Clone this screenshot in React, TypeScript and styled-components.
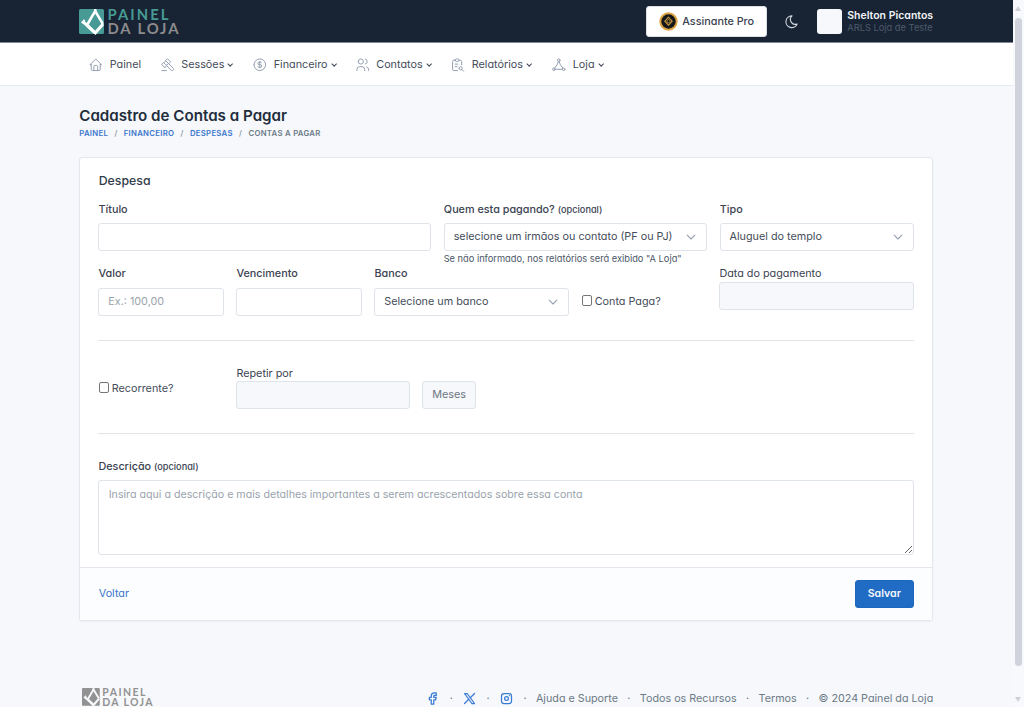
import React from "react";
import styled, { createGlobalStyle, css } from "styled-components";
import {
  TbHome,
  TbGavel,
  TbCoin,
  TbUsers,
  TbReportSearch,
  TbMoon,
  TbBrandFacebook,
  TbBrandX,
  TbBrandInstagram,
} from "react-icons/tb";

const Global = createGlobalStyle`
  *, *::before, *::after { box-sizing: border-box; }
  html, body { margin: 0; height: 100%; overflow: hidden; }
  body {
    background: #f6f8fb;
    color: #454c5a;
    font-family: Inter, "Liberation Sans", sans-serif;
    font-feature-settings: "cv03", "cv04", "cv11";
    font-size: 10.8px;
    line-height: 15.5px;
  }
  a { color: inherit; text-decoration: none; }
  input, select, textarea, button { font: inherit; font-feature-settings: inherit; }
`;

const Window = styled.div`
  display: grid;
  grid-template-columns: 1012.5px 1fr;
  height: 707px;
  overflow: hidden;
`;
const Page = styled.div`
  height: 707px;
  overflow: hidden;
`;
const Container = styled.div`
  width: 854px;
  margin: 0 auto;
  padding-top: 2px;
  display: flex;
  align-items: center;
`;

/* scroll bar */
const Rail = styled.div`
  display: flex;
  flex-direction: column;
  align-items: center;
  padding: 6px 0 5px;
  background: #f8f9fc;
`;
const Arrow = styled.div<{ $down?: boolean }>`
  width: 0;
  height: 0;
  border-left: 3.5px solid transparent;
  border-right: 3.5px solid transparent;
  ${(p) => (p.$down ? css`border-top: 5px solid #cfd1d8; margin-top: auto;` : css`border-bottom: 5px solid #cfd1d8;`)}
`;
const Thumb = styled.div`
  width: 7px;
  height: 648px;
  margin-top: 7px;
  border-radius: 4px;
  background: #d0d3db;
`;

/* top bar */
const TopBar = styled.header`
  background: #182433;
  height: 42.5px;
  border-bottom: 1px solid #7d8795;
  display: flex;
`;
const ProButton = styled.button`
  margin-left: auto;
  width: 121px;
  height: 31px;
  display: flex;
  align-items: center;
  gap: 4px;
  padding: 0 0 0 12px;
  border: 1px solid #dce1e7;
  border-radius: 3px;
  background: #fff;
  color: #3a4251;
  font-weight: 480;
  white-space: nowrap;
`;
const Moon = styled.span`
  display: flex;
  margin: 0 17px;
  color: #d5dae1;
  font-size: 15.5px;
`;
const Avatar = styled.span`
  width: 25px;
  height: 25px;
  border-radius: 3px;
  background: #f6f8fb;
  margin-right: 5.5px;
`;
const User = styled.div`
  width: 86px;
  white-space: nowrap;
`;
const UserName = styled.div`
  color: #f0f3f7;
  font-weight: 580;
  font-size: 10.5px;
  line-height: 13px;
`;
const UserLodge = styled.div`
  color: #4d5a6c;
  font-size: 9.3px;
  line-height: 12px;
`;

/* navigation */
const NavBar = styled.nav`
  height: 43.5px;
  background: #fff;
  border-bottom: 1px solid #e6eaf0;
  display: flex;
`;
const NavItem = styled.a<{ $w: number }>`
  width: ${(p) => p.$w}px;
  display: flex;
  align-items: center;
  white-space: nowrap;
  svg:first-child { font-size: 15.5px; color: #929dae; margin-right: 6px; stroke-width: 1.5; }
`;
const NavList = styled.div`
  display: flex;
  padding-left: 9px;
`;
const Caret = styled.i`
  width: 4.4px;
  height: 4.4px;
  border: solid #3f4654;
  border-width: 0 1.1px 1.1px 0;
  transform: rotate(45deg);
  margin: -2px 0 0 4px;
`;

/* page heading */
const Heading = styled.div`
  width: 854px;
  margin: 0 auto;
  padding-top: 20px;
  height: 71px;
`;
const Title = styled.h1`
  margin: 0;
  font-size: 15.15px;
  line-height: 20.5px;
  font-weight: 580;
  color: #222d3c;
`;
const Crumbs = styled.div`
  display: flex;
  font-size: 7.75px;
  line-height: 13.5px;
  font-weight: 580;
  letter-spacing: 0.29px;
  color: #6c7a86;
  a { color: #3a76cc; }
  span { width: 15.6px; text-align: center; font-weight: 400; }
`;

/* card */
const Card = styled.main`
  width: 854px;
  height: 464px;
  margin: 0 auto;
  background: #fff;
  border: 1px solid #e3e7ed;
  border-radius: 3px;
  box-shadow: 0 1px 2px rgba(24, 36, 51, 0.04);
  display: flex;
  flex-direction: column;
`;
const CardBody = styled.div`
  padding: 13.5px 18px 0;
  flex: 1;
`;
const SectionTitle = styled.h3`
  margin: 0 0 12px;
  padding-left: 0.5px;
  font-size: 12.3px;
  line-height: 18px;
  font-weight: 480;
  color: #333c4b;
`;
const Row = styled.div<{ $h: number }>`
  display: flex;
  gap: 12.4px;
  height: ${(p) => p.$h}px;
`;
const Field = styled.div<{ $w: number; $gap?: number }>`
  width: ${(p) => p.$w}px;
  display: flex;
  flex-direction: column;
  gap: ${(p) => p.$gap ?? 6}px;
`;
const Label = styled.label<{ $plain?: boolean }>`
  font-weight: ${(p) => (p.$plain ? 400 : 480)};
  line-height: 15.5px;
  padding-left: 0.2px;
  white-space: nowrap;
  color: #3b4352;
  small { font-size: 9.2px; }
`;
const control = css`
  width: 100%;
  height: 28px;
  border: 1px solid #dfe3ea;
  border-radius: 3px;
  background: #fff;
  color: #454c5a;
  padding: 0 9px;
  outline: none;
`;
const Input = styled.input`
  ${control}
  display: block;
  &::placeholder { color: #99a3ad; opacity: 1; }
  &:disabled { background: #f6f8fb; }
`;
const SelectBox = styled.div`
  ${control}
  display: flex;
  align-items: center;
  justify-content: space-between;
  white-space: nowrap;
  padding-right: 10px;
`;
const TextArea = styled.textarea`
  ${control}
  display: block;
  height: 75px;
  padding: 6px 9.5px;
  font-size: 10.66px;
  resize: vertical;
  &::placeholder { color: #99a3ad; opacity: 1; }
`;
const Hint = styled.small`
  font-size: 9.27px;
  line-height: 12px;
  margin-top: -4px;
  color: #4c5767;
  white-space: nowrap;
`;
const Check = styled.label<{ $w: number; $top: number }>`
  width: ${(p) => p.$w}px;
  padding-top: ${(p) => p.$top}px;
  display: flex;
  align-items: flex-start;
  gap: 2.5px;
  white-space: nowrap;
  input { width: 10.5px; height: 10.5px; margin: 1px 0 0 0.5px; appearance: none; border: 1px solid #767676; border-radius: 2px; background: #fff; }
`;
const Rule = styled.hr`
  margin: 0;
  height: 1px;
  border: 0;
  background: #e1e4e9;
`;
const RepeatField = styled.div`
  width: 173.5px;
  padding-top: 24.5px;
`;
const UnitSlot = styled.div`
  padding-top: 24.5px;
`;
const Unit = styled.div`
  margin-top: 15.5px;
  width: 54px;
  height: 28px;
  border: 1px solid #dfe3ea;
  border-radius: 3px;
  background: #f6f8fb;
  color: #6c7683;
  display: flex;
  align-items: center;
  justify-content: center;
`;
const Description = styled.div`
  padding-top: 25px;
  display: flex;
  flex-direction: column;
  gap: 5px;
`;
const CardFooter = styled.footer`
  height: 53px;
  padding: 0 18.5px;
  border-top: 1px solid #e3e7ed;
  background: #fcfdfe;
  display: flex;
  align-items: center;
  justify-content: space-between;
`;
const BackLink = styled.a`
  color: #3a76cc;
`;
const Save = styled.button`
  width: 59px;
  height: 28px;
  padding: 0;
  border: 1px solid #1f66bd;
  border-radius: 3px;
  background: #206bc4;
  color: #f6f8fb;
  font-size: 10.6px;
  font-weight: 580;
`;

/* page footer */
const PageFooter = styled.div`
  width: 854px;
  margin: 0 auto;
  padding-top: 67px;
  display: flex;
  align-items: flex-start;
  justify-content: space-between;
`;
const FooterLinks = styled.div`
  display: flex;
  align-items: center;
  height: 21px;
  color: #6c7a86;
  white-space: nowrap;
  font-size: 10.75px;
  svg { display: block; color: #3a7bd5; font-size: 15px; stroke-width: 2; }
`;
const Dot = styled.span`
  width: 21.9px;
  text-align: center;
`;
const LogoSvg = styled.svg<{ $indent?: number }>`
  display: block;
  overflow: visible;
  margin-left: ${(p) => p.$indent ?? 0}px;
  text { font-family: Lato, sans-serif; font-weight: 700; }
`;

type LogoProps = { width: number; height: number; mark: string; top: string; bottom: string; cut: string; indent?: number };

const Logo = ({ width, height, mark, top, bottom, cut, indent }: LogoProps) => (
  <LogoSvg width={width} height={height} viewBox="0 0 100 26" $indent={indent}>
    <rect x="0" y="0" width="25" height="25" rx="1.5" fill={mark} />
    <g fill="none" stroke={cut}>
      <path d="M16.2 2.2L8.6 15M16.2 2.2l7.6 12.6" strokeWidth="2.6" />
      <path d="M4.4 13.2l12 10.6 7.6-8.8" strokeWidth="3" />
      <path d="M5.6 10.8l-2.8 3.4" strokeWidth="2" />
      <path d="M16.2 0v3.6" strokeWidth="2.6" />
    </g>
    <path d="M8.2 13.6l8.2 9.6-1.6 1.6L7 17.4z" fill={cut} />
    <text x="28.5" y="11.4" fontSize="14.8" fill={top} textLength="61" lengthAdjust="spacing">PAINEL</text>
    <text x="28.5" y="25" fontSize="14.8" fill={bottom} textLength="71" lengthAdjust="spacing">DA LOJA</text>
  </LogoSvg>
);

const LodgeIcon = () => (
  <svg width="1em" height="1em" viewBox="0 0 24 24" fill="none" stroke="currentColor" strokeWidth="1.5" strokeLinecap="round" strokeLinejoin="round">
    <circle cx="12" cy="5" r="2" />
    <circle cx="4.5" cy="19" r="2" />
    <circle cx="19.5" cy="19" r="2" />
    <path d="M6.5 19h11" />
    <path d="M11.4 7L9.5 12 5.6 17.2" />
    <path d="M12.6 7l1.9 5 3.9 5.2" />
  </svg>
);

const Chevron = () => (
  <svg width="10" height="10" viewBox="0 0 10 10" fill="none" stroke="#97a1b0" strokeWidth="1.1" strokeLinecap="round" strokeLinejoin="round">
    <path d="M1.2 3.2L5 7l3.8-3.8" />
  </svg>
);

const Seal = () => (
  <svg width="19" height="19" viewBox="0 0 19 19">
    <circle cx="9.5" cy="9.5" r="9.2" fill="#dda544" />
    <circle cx="9.5" cy="9.5" r="7.2" fill="#17181c" />
    <path d="M9.5 5.2L5.8 9.2l3.7 4 3.7-4z" fill="none" stroke="#c99a3e" strokeWidth="1.1" />
    <path d="M9.5 7.2L7.6 9.2l1.9 2 1.9-2z" fill="none" stroke="#c99a3e" strokeWidth="0.8" />
  </svg>
);

const menu = [
  { label: "Painel", icon: TbHome, w: 71.5, caret: false },
  { label: "Sessões", icon: TbGavel, w: 92.5, caret: true },
  { label: "Financeiro", icon: TbCoin, w: 102.5, caret: true },
  { label: "Contatos", icon: TbUsers, w: 95.5, caret: true },
  { label: "Relatórios", icon: TbReportSearch, w: 101, caret: true },
  { label: "Loja", icon: LodgeIcon, w: 60, caret: true },
];

export default function App() {
  return (
    <Window>
      <Global />
      <Page>
        <TopBar>
          <Container>
            <Logo width={100} height={26} mark="#479a95" top="#479a95" bottom="#8b8b8d" cut="#fff" />
            <ProButton>
              <Seal />
              Assinante Pro
            </ProButton>
            <Moon><TbMoon strokeWidth={1.75} /></Moon>
            <Avatar />
            <User>
              <UserName>Shelton Picantos</UserName>
              <UserLodge>ARLS Loja de Teste</UserLodge>
            </User>
          </Container>
        </TopBar>
        <NavBar>
          <Container>
            <NavList>
              {menu.map(({ label, icon: Icon, w, caret }) => (
                <NavItem key={label} $w={w}>
                  <Icon />
                  {label}
                  {caret && <Caret />}
                </NavItem>
              ))}
            </NavList>
          </Container>
        </NavBar>

        <Heading>
          <Title>Cadastro de Contas a Pagar</Title>
          <Crumbs>
            <a>PAINEL</a><span>/</span>
            <a>FINANCEIRO</a><span>/</span>
            <a>DESPESAS</a><span>/</span>
            CONTAS A PAGAR
          </Crumbs>
        </Heading>

        <Card>
          <CardBody>
            <SectionTitle>Despesa</SectionTitle>
            <Row $h={64.5}>
              <Field $w={333}>
                <Label>Título</Label>
                <Input />
              </Field>
              <Field $w={263.5}>
                <Label>Quem esta pagando? <small>(opcional)</small></Label>
                <SelectBox>selecione um irmãos ou contato (PF ou PJ)<Chevron /></SelectBox>
                <Hint>Se não informado, nos relatórios será exibido "A Loja"</Hint>
              </Field>
              <Field $w={194.5}>
                <Label>Tipo</Label>
                <SelectBox>Aluguel do templo<Chevron /></SelectBox>
              </Field>
            </Row>
            <Row $h={74}>
              <Field $w={125.6}>
                <Label>Valor</Label>
                <Input placeholder="Ex.: 100,00" />
              </Field>
              <Field $w={125.6}>
                <Label>Vencimento</Label>
                <Input />
              </Field>
              <Field $w={194.6}>
                <Label>Banco</Label>
                <SelectBox>Selecione um banco<Chevron /></SelectBox>
              </Field>
              <Check $w={125.6} $top={28}><input type="checkbox" />Conta Paga?</Check>
              <Field $w={194.6} $gap={0}>
                <Label $plain>Data do pagamento</Label>
                <Input disabled />
              </Field>
            </Row>
            <Rule />
            <Row $h={92}>
              <Check $w={125.6} $top={40}><input type="checkbox" />Recorrente?</Check>
              <RepeatField>
                <Label $plain>Repetir por</Label>
                <Input disabled />
              </RepeatField>
              <UnitSlot><Unit>Meses</Unit></UnitSlot>
            </Row>
            <Rule />
            <Description>
              <Label>Descrição <small>(opcional)</small></Label>
              <TextArea placeholder="Insira aqui a descrição e mais detalhes importantes a serem acrescentados sobre essa conta" />
            </Description>
          </CardBody>
          <CardFooter>
            <BackLink>Voltar</BackLink>
            <Save>Salvar</Save>
          </CardFooter>
        </Card>

        <PageFooter>
          <Logo width={71} height={18.5} indent={3} mark="#929292" top="#929292" bottom="#929292" cut="#f6f8fb" />
          <FooterLinks>
            <TbBrandFacebook /><Dot>·</Dot>
            <TbBrandX /><Dot>·</Dot>
            <TbBrandInstagram /><Dot>·</Dot>
            Ajuda e Suporte<Dot>·</Dot>
            Todos os Recursos<Dot>·</Dot>
            Termos<Dot>·</Dot>
            © 2024 Painel da Loja
          </FooterLinks>
        </PageFooter>
      </Page>
      <Rail>
        <Arrow />
        <Thumb />
        <Arrow $down />
      </Rail>
    </Window>
  );
}
